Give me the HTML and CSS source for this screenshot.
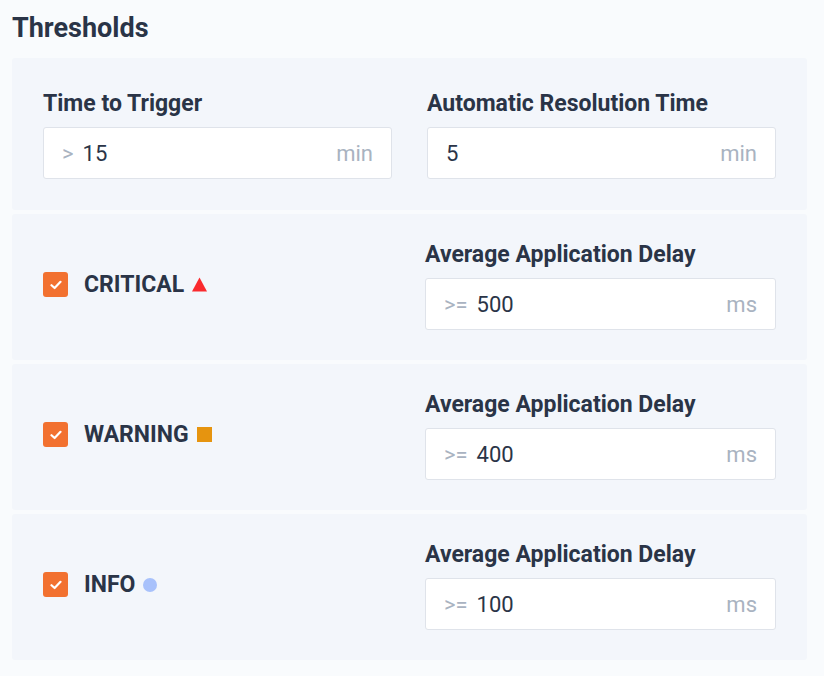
FILE: index.html
```html
<!DOCTYPE html>
<html lang="en">
	<head>
	<meta charset="UTF-8" />
	<meta name="viewport" content="width=device-width, initial-scale=1.0" />
	<title>Thresholds</title>
	<link rel="stylesheet" href="styles.css">
	</head>
	<body>
		<h2 class="title">Thresholds</h2>
		<section class="panel timing">
			<div class="field">
				<label>Time to Trigger</label>
				<div class="input"><span class="pre">&gt;</span><span class="val">15</span><span class="unit">min</span></div>
			</div>
			<div class="field">
				<label>Automatic Resolution Time</label>
				<div class="input"><span class="val">5</span><span class="unit">min</span></div>
			</div>
		</section>
		<section class="panel level">
			<div class="check">
				<span class="box"><svg width="12" height="10" viewBox="0 0 12 10"><path d="M1.5 5.2 4.6 8 10.5 1.8" fill="none" stroke="#fff" stroke-width="2.2" stroke-linecap="round" stroke-linejoin="round"/></svg></span>
				<span class="name">CRITICAL</span>
				<svg class="mark" width="15" height="15" viewBox="0 0 15 15"><path d="M7.5 0.5 15 14.5H0z" fill="#fa2a2e"/></svg>
			</div>
			<div class="field">
				<label>Average Application Delay</label>
				<div class="input"><span class="pre">&gt;=</span><span class="val">500</span><span class="unit">ms</span></div>
			</div>
		</section>
		<section class="panel level">
			<div class="check">
				<span class="box"><svg width="12" height="10" viewBox="0 0 12 10"><path d="M1.5 5.2 4.6 8 10.5 1.8" fill="none" stroke="#fff" stroke-width="2.2" stroke-linecap="round" stroke-linejoin="round"/></svg></span>
				<span class="name">WARNING</span>
				<span class="mark square"></span>
			</div>
			<div class="field">
				<label>Average Application Delay</label>
				<div class="input"><span class="pre">&gt;=</span><span class="val">400</span><span class="unit">ms</span></div>
			</div>
		</section>
		<section class="panel level">
			<div class="check">
				<span class="box"><svg width="12" height="10" viewBox="0 0 12 10"><path d="M1.5 5.2 4.6 8 10.5 1.8" fill="none" stroke="#fff" stroke-width="2.2" stroke-linecap="round" stroke-linejoin="round"/></svg></span>
				<span class="name">INFO</span>
				<span class="mark dot"></span>
			</div>
			<div class="field">
				<label>Average Application Delay</label>
				<div class="input"><span class="pre">&gt;=</span><span class="val">100</span><span class="unit">ms</span></div>
			</div>
		</section>
	</body>
</html>
```

FILE: styles.css
```css
* { box-sizing: border-box; }
html { font-family: Roboto, "Liberation Sans", sans-serif; }
body { margin: 0; padding: 0 17px 0 12px; background-color: #f9fbfd; color: #2a3447; }
.title { margin: 12px 0 14px; font-size: 27px; line-height: 32px; font-weight: 700; }
.panel { background: #f3f6fb; border-radius: 3px; margin-bottom: 4px; display: grid; }
.timing { padding: 33px 31px 31px; grid-template-columns: 349px 349px; column-gap: 35px; }
.level { padding: 28px 31px 30px; grid-template-columns: 1fr 351px; column-gap: 31px; }
.field label { display: block; font-size: 23px; line-height: 26px; font-weight: 700; margin-bottom: 10px; }
.input { display: flex; align-items: center; height: 52px; padding: 0 18px 0 18px; background: #fff; border: 1px solid #dfe3ea; border-radius: 3px; font-size: 22px; }
.input .pre { color: #a9b3c1; margin-right: 9px; }
.input .val { flex: 1; }
.input .unit { color: #a9b3c1; }
.check { display: flex; align-items: center; align-self: center; padding-bottom: 3px; }
.check .box { width: 25px; height: 25px; border-radius: 3px; background: #f27130; display: flex; justify-content: center; align-items: center; margin-right: 16px; }
.check .name { font-size: 23px; font-weight: 700; line-height: 26px; margin-right: 8px; }
.mark { display: block; }
.square { width: 15px; height: 15px; background: #e6940f; }
.dot { width: 14px; height: 14px; border-radius: 50%; background: #a8c1fb; }
```
